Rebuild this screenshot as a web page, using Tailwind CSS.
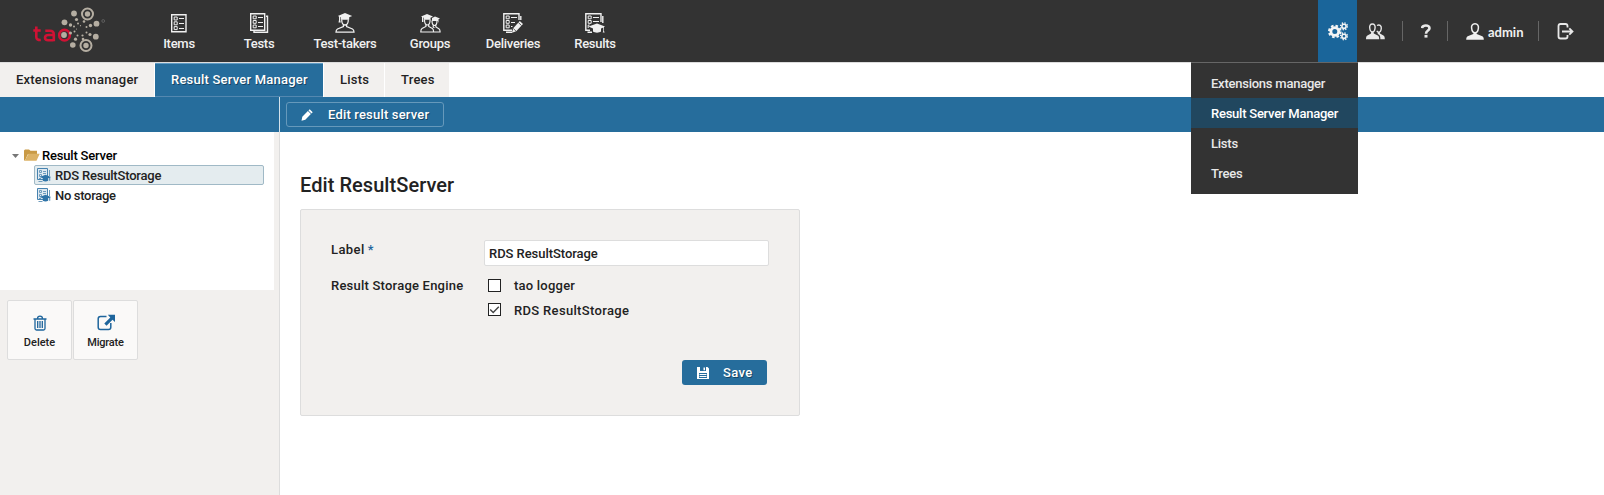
<!DOCTYPE html>
<html lang="en">
<head>
<meta charset="utf-8">
<title>TAO - Result Server Manager</title>
<script src="https://cdn.jsdelivr.net/npm/@tailwindcss/browser@4"></script>
</head>
<body class="h-[495px] w-[1604px] overflow-hidden bg-white font-['Roboto','Liberation_Sans',sans-serif] text-[13px] leading-5 font-medium text-[#222]">
<svg class="hidden">
  <symbol id="list" viewBox="0 0 20 20"><path fill="none" stroke="currentColor" stroke-width="1.4" d="M2.7 1.7h14.3v17H2.7z"/><path fill="none" stroke="currentColor" d="M5.2 4h3v3h-3zM5.2 8.8h3v3h-3zM5.2 13.6h3v3h-3zM10 5.500h5M10 10.500h5M10 15.500h5"/></symbol>
  <symbol id="tests" viewBox="0 0 20 20"><path fill="none" stroke="currentColor" stroke-width="1.4" d="M1.7.8h14v16.400h-14z"/><path fill="none" stroke="currentColor" d="M4.2 3h3v2.800h-3zM4.2 7.500h3v2.800h-3zM4.2 12h3v2.800h-3zM9 4.500h5M9 9.500h5M9 13.500h5"/><path fill="none" stroke="currentColor" stroke-width="1.400" d="M17 3.200h1.500v16.100H5V18"/></symbol>
  <symbol id="grad" viewBox="0 0 20 20"><path fill="currentColor" d="M10 0l7.200 3-3 1.300v2.400H5.800V4.300l-.6-.2v2.800l.5 2.600H3.500L4 7V3.600L2.800 3z"/><path fill="none" stroke="currentColor" stroke-width="1.300" d="M6.700 6.500c0 3 1.200 5.500 3.300 5.500s3.300-2.500 3.300-5.500M8.400 11.500v2L2.500 16c-1 .5-1.500 1.500-1.500 3.200h18c0-1.700-.5-2.700-1.500-3.200l-5.900-2.500v-2"/></symbol>
  <symbol id="groups" viewBox="0 0 21 20"><path fill="currentColor" d="M7 1l6 2.500-2.500 1.200v2H4v-2l-.6-.2V9H2V4L1 3.500zM15 3.500l5 2-1.500.8V10l-.7-2H12V5z"/><path fill="none" stroke="currentColor" stroke-width="1.200" d="M4.500 6.500c0 3 .7 5.500 2.800 5.500s2.800-2.500 2.800-5.500M5.900 11.500v2L2 15.500c-.8.500-1.200 1.500-1.200 3.500h12.800c0-2-.4-3-1.200-3.500l-3.700-2v-2M12 7.500c0 2.500.6 5 2.500 5S17 10 17 7.500M13.200 12.500v1.500l1.200.8M15.900 12.500V14l3 1.700c.8.500 1.200 1.300 1.200 3.300H14"/></symbol>
  <symbol id="deliver" viewBox="0 0 20 20"><path fill="none" stroke="currentColor" stroke-width="1.400" d="M16 7V.8H.8v16.400H9M3 19.300h6M17.800 3v4"/><path fill="none" stroke="currentColor" d="M3.200 3h3v2.800h-3zM3.200 7.500h3v2.800h-3zM3.200 12h3v2.800h-3zM8 4.500h6M8 9.500h4M8 13.500h1.500"/><path fill="currentColor" d="M16.800 8l3.200 3-6.800 7.200L9 19.800l1.200-4.500z"/><path stroke="#333" stroke-width=".8" d="M15.300 9.500l3.200 3M10.300 15.500l2.700 2.700"/></symbol>
  <symbol id="results" viewBox="0 0 20 20"><path fill="none" stroke="currentColor" stroke-width="1.400" d="M16 9V.8H.8v16.400H5M2.500 19.300H7M17.800 3v7"/><path fill="none" stroke="currentColor" d="M3.200 3h3v2.800h-3zM3.200 7.500h3v2.800h-3zM8 4.500h6M8 8.500h6M3.200 15v-3h1.500"/><path fill="currentColor" d="M12 10.500l8 3-1 .5v4l.7 1.500h-2L18.300 18v-3.500l-2.300 1v3c-2 1.500-6 1.500-8 0v-3l-4.500-2z"/></symbol>
  <symbol id="results-sm" viewBox="0 0 14 14"><path fill="#dfe9f1" stroke="#4683b0" d="M.5.500h10v11H.5z"/><path fill="none" stroke="#6f9cbd" d="M12.500 2v6M1.500 13.500h4M2.500 2.500h2v2h-2zM6 3.500h3M6 5.500h3M2.500 6.500h2v2h-2zM2 10.500h2"/><path fill="#2f74a8" d="M8.500 6.700L14 9l-.8.400v3.400h-.9V9.800l-1.100.5v2.500c-1.500 1-4 1-5.400 0v-2.500L2.800 9z"/></symbol>
  <symbol id="user" viewBox="0 0 18 17"><path fill="none" stroke="currentColor" stroke-width="1.500" d="M9 .8C6.300.8 5.300 3 5.600 5.200 5.900 7.800 7.200 9.800 9 9.800s3.100-2 3.400-4.600C12.700 3 11.700.8 9 .8z"/><path fill="currentColor" d="M7.700 9.500h2.600l.4 1.500 5.600 2.200c1 .5 1.500 1.500 1.500 3.500H.2c0-2 .5-3 1.500-3.500L7.300 11z"/></symbol>
</svg>

<header class="flex h-[62px] bg-[#333] text-[#f0f0f0]">
  <svg class="h-[62px] w-[150px] shrink-0" viewBox="0 0 150 62">
    <g fill="none" stroke="#cf1234" stroke-width="2.600"><path d="M36.300 26.500v10.500q0 3.300 4.500 3M33.300 30.500h7.400M45.300 30.700h4.500q4 0 4 3.700V41.300M53.500 35h-4.700q-3.800 0-3.800 2.700T48.500 40.200h5"/><circle cx="64.500" cy="35.200" r="5.300"/></g>
    <g fill="#b5aea2"><circle cx="64" cy="35" r="2.900"/><circle cx="64.500" cy="22.300" r="2.900"/><circle cx="74" cy="13.500" r="2.900"/><circle cx="96.500" cy="23.700" r="2.900"/><circle cx="95.800" cy="36.700" r="2.900"/><circle cx="72.800" cy="45" r="2.800"/><circle cx="87.500" cy="14" r="2.700"/><circle cx="86" cy="45.500" r="2.700"/><circle cx="70.500" cy="25" r="1.700"/><circle cx="76.500" cy="19.500" r="1.600"/><circle cx="90.500" cy="25.500" r="1.700"/><circle cx="90" cy="34.500" r="1.600"/><circle cx="75.500" cy="39.200" r="1.600"/><circle cx="70.500" cy="33" r="1.500"/><circle cx="74" cy="26.500" r="1"/><circle cx="78" cy="23.500" r="1"/><circle cx="86.500" cy="27" r="1"/><circle cx="86.500" cy="32.500" r="1"/><circle cx="77.500" cy="35.500" r="1"/><circle cx="74.500" cy="31.500" r="1"/><circle cx="82.500" cy="35.500" r="1.100"/><circle cx="84" cy="21.500" r="1.300"/><circle cx="83" cy="39" r="1.300"/><circle cx="80.500" cy="25.700" r=".6"/><circle cx="76.500" cy="29" r=".6"/></g>
    <g fill="none" stroke="#b5aea2" stroke-width="2"><circle cx="87.500" cy="14" r="5.500"/><circle cx="86" cy="45.500" r="5.500"/></g>
    <circle cx="103.200" cy="21" r="1.400" fill="none" stroke="#777" stroke-width=".6"/>
  </svg>
  <nav class="flex grow tracking-[-0.27px]">
    <a class="flex w-[58px] flex-col items-center pt-[13px]"><svg class="h-5 w-5"><use href="#list"/></svg><span class="mt-px">Items</span></a>
    <a class="ml-[22px] flex w-[58px] flex-col items-center pt-[13px]"><svg class="h-5 w-5"><use href="#tests"/></svg><span class="mt-px">Tests</span></a>
    <a class="ml-[12px] flex w-[90px] flex-col items-center pt-[13px]"><svg class="h-5 w-5"><use href="#grad"/></svg><span class="mt-px">Test-takers</span></a>
    <a class="ml-[8px] flex w-[64px] flex-col items-center pt-[13px]"><svg class="h-5 w-[21px]"><use href="#groups"/></svg><span class="mt-px">Groups</span></a>
    <a class="ml-[10px] flex w-[82px] flex-col items-center pt-[13px]"><svg class="h-5 w-5"><use href="#deliver"/></svg><span class="mt-px">Deliveries</span></a>
    <a class="ml-[10px] flex w-[62px] flex-col items-center pt-[13px]"><svg class="h-5 w-5"><use href="#results"/></svg><span class="mt-px">Results</span></a>
  </nav>
  <div class="flex w-[286px] items-center">
    <a class="flex h-[62px] w-[39px] items-center justify-center bg-[#1a659a]">
      <svg class="h-[19px] w-5" viewBox="0 0 20 19" fill="none" stroke="#f4f4f4"><circle cx="6.800" cy="9.500" r="3.900" stroke-width="2.800"/><circle cx="6.800" cy="9.500" r="5.800" stroke-width="2" stroke-dasharray="2.550 2.005"/><circle cx="16" cy="4.300" r="2.100" stroke-width="1.600"/><circle cx="16" cy="4.300" r="3.400" stroke-width="1.400" stroke-dasharray="1.330 1.340"/><circle cx="16" cy="14.300" r="2.100" stroke-width="1.600"/><circle cx="16" cy="14.300" r="3.400" stroke-width="1.400" stroke-dasharray="1.330 1.340"/></svg>
    </a>
    <svg class="ml-[9px] h-[17px] w-[19px]" viewBox="0 0 19 17" fill="none" stroke="#e8e8e8" stroke-width="1.400"><path d="M6.400 1C4.300 1 3.500 2.800 3.700 4.800 3.900 7 5 9 6.400 9S8.900 7 9.100 4.800C9.300 2.800 8.500 1 6.400 1zM11 2.500c2.500-1.300 4.500 0 4.300 2.800-.2 2-1.200 3.900-2.500 3.900-1 0-1.500-.7-2-1.400"/><path fill="#e8e8e8" stroke="none" d="M5.300 8.800h2.200l.3 1.600 4 2.100c1 .5 1.400 1.500 1.400 3.700H0c0-2.200.4-3.200 1.400-3.700l3.600-2.100zM11.800 9H13.800l.2 1.600 3.400 1.800c1 .6 1.400 1.600 1.400 3.800h-4.400c0-2.600-.6-4-1.700-4.600l-1-.6z"/></svg>
    <i class="ml-[17px] h-5 w-px bg-[#666]"></i>
    <svg class="ml-[18px] h-[14px] w-[10px]" viewBox="0 0 10 14"><path fill="none" stroke="#e8e8e8" stroke-width="2.600" d="M1 4.200C1.200 2.300 2.700 1.500 4.800 1.500c2.300 0 3.700 1 3.700 2.700C8.500 6.700 5 6.300 5 9.700"/><path fill="#e8e8e8" d="M3.500 10.900h3v2.700h-3z"/></svg>
    <i class="ml-4 h-5 w-px bg-[#666]"></i>
    <svg class="ml-[18px] h-[17px] w-[18px]"><use href="#user"/></svg>
    <span class="mt-[2px] ml-[4px] w-[36px] font-['Lato',sans-serif] text-[13px] font-bold">admin</span>
    <i class="ml-[14px] h-5 w-px bg-[#666]"></i>
    <svg class="ml-[17px] h-[18px] w-[18px]" viewBox="0 0 18 18" fill="none" stroke="#e8e8e8" stroke-width="1.800"><path d="M11.500 5.500V4q0-2-2-2h-5q-2 0-2 2v10.500q0 2 2 2h5q2 0 2-2V13"/><path d="M6 9.500h10M13.300 6.300l3.200 3.200-3.200 3.200"/></svg>
  </div>
</header>

<div class="flex h-[35px] gap-px border-t border-[#ddd] bg-white tracking-[0.22px]">
  <a class="w-[154px] bg-[#f2f0ee] pt-[7px] pl-4">Extensions manager</a>
  <a class="w-[168px] border-t border-b border-t-[#5f9bc4] border-b-[#5488b0] bg-[#266d9c] pt-[6px] pl-4 text-white [text-shadow:1px_1px_0_rgba(0,0,0,.4)]">Result Server Manager</a>
  <a class="w-[60px] bg-[#f2f0ee] pt-[7px] pl-4">Lists</a>
  <a class="w-[64px] bg-[#f2f0ee] pt-[7px] pl-4">Trees</a>
</div>

<div class="flex h-[35px] bg-[#266d9c]">
  <div class="w-[280px] border-r border-[#d3e2eb]"></div>
  <a class="mt-[5px] ml-[6px] flex h-[25px] w-[158px] items-center rounded-[3px] border border-[#6699bb] pl-[14px] tracking-[0.18px] text-white [text-shadow:1px_1px_0_rgba(0,0,0,.4)]">
    <svg class="h-3 w-3" viewBox="0 0 12 12"><path fill="#fff" d="M8.700.3l3 3-1.200 1.200-3-3zM6.900 2.100l3 3-5.600 5.600-3.800 1 .8-4z"/></svg>
    <span class="mt-px ml-[15px]">Edit result server</span>
  </a>
</div>

<main class="flex h-[363px]">
  <aside class="w-[280px] shrink-0 border-r border-[#ddd] bg-[#f2f0ee]">
    <div class="h-[158px] w-[274px] bg-white pt-[13px] tracking-[-0.2px] text-black">
      <div class="flex h-5 items-center pl-3">
        <svg class="mt-px h-1 w-[7px]" viewBox="0 0 7 4"><path fill="#777" d="M0 0h7L3.500 4z"/></svg>
        <svg class="ml-[5px] h-3 w-4" viewBox="0 0 16 12"><path fill="#c99a45" d="M0 1.500L1 .5h4l1.500 1.200H13V5H4L1 11.500H0z"/><path fill="#dcb265" d="M4.500 4.800H15.700L12.500 11.700H.8z"/></svg>
        <span class="mt-[2px] ml-[2px]">Result Server</span>
      </div>
      <div class="ml-[34px] flex h-5 w-[230px] items-center rounded-[2px] border border-[#a0b9c6] bg-[#e4ecef] pl-[2px] text-[#222]">
        <svg class="h-[14px] w-[14px]"><use href="#results-sm"/></svg><span class="mt-[2px] ml-[4px]">RDS ResultStorage</span>
      </div>
      <div class="ml-[34px] flex h-5 w-[230px] items-center pl-[3px] text-[#222]">
        <svg class="h-[14px] w-[14px]"><use href="#results-sm"/></svg><span class="mt-[2px] ml-[4px] tracking-[-0.32px]">No storage</span>
      </div>
    </div>
    <div class="mt-[10px] ml-[7px] flex gap-px text-[11px]">
      <a class="flex h-[60px] w-[65px] flex-col items-center rounded-[2px] border border-[#ddd] bg-[#faf9f8] pt-[14px]">
        <svg class="h-4 w-4" viewBox="0 0 16 16" fill="none" stroke="#1e659c" stroke-width="1.300"><path d="M1.500 4h13M5.500 3.500q0-2.300 2.500-2.300t2.500 2.300M3 4v9.500q0 1.500 1.500 1.500h7q1.500 0 1.500-1.500V4M5.700 6v7M8 6v7M10.300 6v7"/></svg>
        <span class="mt-[2px]">Delete</span>
      </a>
      <a class="flex h-[60px] w-[65px] flex-col items-center rounded-[2px] border border-[#ddd] bg-[#faf9f8] pt-[13px] tracking-[-0.22px]">
        <svg class="h-[17px] w-[18px]" viewBox="0 0 18 17"><path fill="none" stroke="#1e659c" stroke-width="1.500" d="M9.500 2.500H3.500Q1.200 2.500 1.200 4.800v8.400q0 2.300 2.300 2.300h8q2.300 0 2.300-2.300V9"/><path fill="#1e659c" d="M10.800.8H18V8l-2.500-2.300-6 6-2.200-2.200 6-6z"/></svg>
        <span class="mt-[2px]">Migrate</span>
      </a>
    </div>
  </aside>
  <section class="pt-[41px] pl-5 tracking-[0.22px]">
    <h1 class="h-9 text-[20px] leading-6 tracking-[0.06px]">Edit ResultServer</h1>
    <form class="h-[207px] w-[500px] rounded-[2px] border border-[#ddd] bg-[#f2f0ee] pt-[30px] pl-[30px]">
      <div class="flex h-9"><div class="w-[153px]"><span class="tracking-[0.4px]">Label</span><span class="ml-[3px] text-[#1e659c]">*</span></div>
        <div class="flex h-[26px] w-[285px] items-center rounded-[2px] border border-[#ddd] bg-white pl-[4px] tracking-[-0.05px]"><span class="mt-px">RDS ResultStorage</span></div></div>
      <div class="flex"><div class="w-[157px]">Result Storage Engine</div>
        <div>
          <div class="flex h-6"><i class="mt-[3px] mr-[13px] h-[13px] w-[13px] border border-[#222] bg-white"></i><span>tao logger</span></div>
          <div class="flex h-6"><i class="mt-[3px] mr-[13px] h-[13px] w-[13px] border border-[#222] bg-white"><svg class="h-[11px] w-[11px]" viewBox="0 0 11 11"><path fill="none" stroke="#444" stroke-width="1.400" d="M1.200 5.500l3 3L9.800 2.700"/></svg></i><span class="mt-px tracking-[0.33px]">RDS ResultStorage</span></div>
        </div>
      </div>
      <a class="mt-[36px] ml-[351px] flex h-[25px] w-[85px] items-center rounded-[3px] bg-[#266d9c] pl-[15px] tracking-[0.4px] text-white [text-shadow:1px_1px_0_rgba(0,0,0,.4)]">
        <svg class="h-3 w-3" viewBox="0 0 12 12"><path fill="#fff" fill-rule="evenodd" d="M0 0h10.500L12 1.500V12H0zM3 0v4h6V0zM2 6v5h8V6z"/><path fill="#fff" d="M6.500.5h1.500v2.700H6.500zM2.500 7h7v1h-7zM2.500 9h7v1h-7z"/></svg>
        <span class="ml-[14px]">Save</span>
      </a>
    </form>
  </section>
</main>

<ul class="absolute top-[62px] left-[1191px] h-[132px] w-[167px] border-t border-[#666] bg-[#333] pt-[5px] leading-8 tracking-[-0.24px] text-[#e8e8e8]">
  <li class="h-[30px] pl-5">Extensions manager</li>
  <li class="h-[30px] bg-[#21475f] pl-5 text-white">Result Server Manager</li>
  <li class="h-[30px] pl-5">Lists</li>
  <li class="h-[30px] pl-5">Trees</li>
</ul>
</body>
</html>
